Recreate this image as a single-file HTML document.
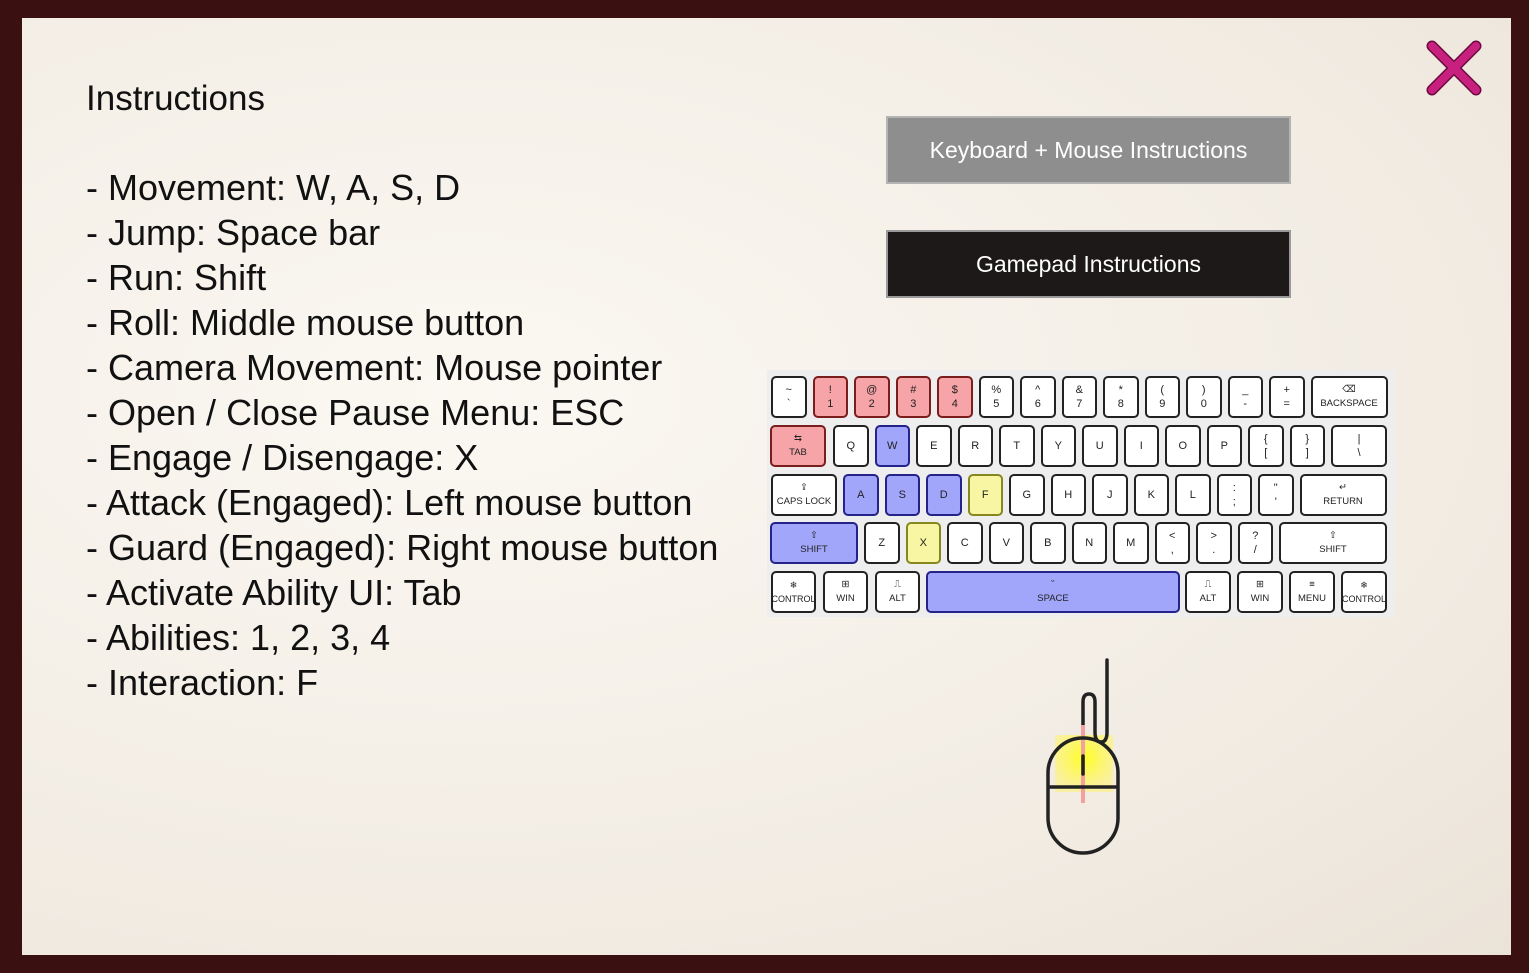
<!DOCTYPE html>
<html><head><meta charset="utf-8"><style>
body{margin:0;width:1529px;height:973px;background:#3a1010;position:relative;overflow:hidden;font-family:"Liberation Sans",sans-serif}
#p{position:absolute;left:22px;top:18px;width:1489px;height:937px;background:radial-gradient(ellipse at 30% 40%,#fbf8f2,#f1ebe2 70%,#ebe3d8)}
.t{position:absolute;left:86px;color:#111;font-size:36px;line-height:45px;white-space:nowrap}
.btn{position:absolute;left:886px;width:401px;height:64px;color:#fff;font-size:23px;display:flex;align-items:center;justify-content:center;border:2px solid}
#kb{position:absolute;left:767px;top:370px;width:628px;height:247px;background:#eeeeee}
.r{position:absolute;display:flex;height:42px}
.k{box-sizing:border-box;width:35.5px;height:42px;margin-right:6px;border:2px solid #222;border-radius:5px;background:#fff;font-size:11px;color:#222;display:flex;flex-direction:column;align-items:center;justify-content:center;line-height:14px;text-align:center}
.s{font-size:9.5px}
.red{background:#f6a4a8;border-color:#7a1d1d}.blu{background:#a2a6fa;border-color:#23238a}.yel{background:#f8f6a2;border-color:#878720}
</style></head><body>
<div id="p"></div>
<div class="t" style="top:76px;font-size:35px">Instructions</div>
<div class="t" style="top:165px">- Movement: W, A, S, D<br>- Jump: Space bar<br>- Run: Shift<br>- Roll: Middle mouse button<br>- Camera Movement: Mouse pointer<br>- Open / Close Pause Menu: ESC<br>- Engage / Disengage: X<br>- Attack (Engaged): Left mouse button<br>- Guard (Engaged): Right mouse button<br>- Activate Ability UI: Tab<br>- Abilities: 1, 2, 3, 4<br>- Interaction: F</div>
<div class="btn" style="top:116px;background:#8e8e8e;border-color:#b4b4b4">Keyboard + Mouse Instructions</div>
<div class="btn" style="top:230px;background:#1d1919;border-color:#9a9a9a">Gamepad Instructions</div>
<svg style="position:absolute;left:1424px;top:38px" width="60" height="60"><path d="M8 8L52 52M52 8L8 52" stroke="#6a0a40" stroke-width="11" stroke-linecap="round"/><path d="M8 8L52 52M52 8L8 52" stroke="#c8207f" stroke-width="8" stroke-linecap="round"/></svg>
<div id="kb">
<div class="r" style="left:4px;top:6px">
<div class="k">~<br>`</div><div class="k red">!<br>1</div><div class="k red">@<br>2</div><div class="k red">#<br>3</div><div class="k red">$<br>4</div><div class="k">%<br>5</div><div class="k">^<br>6</div><div class="k">&amp;<br>7</div><div class="k">*<br>8</div><div class="k">(<br>9</div><div class="k">)<br>0</div><div class="k">_<br>-</div><div class="k">+<br>=</div><div class="k s" style="width:77px">⌫<br>BACKSPACE</div></div>
<div class="r" style="left:3px;top:55px">
<div class="k red s" style="width:56px;margin-right:7px">⇆<br>TAB</div><div class="k">Q</div><div class="k blu">W</div><div class="k">E</div><div class="k">R</div><div class="k">T</div><div class="k">Y</div><div class="k">U</div><div class="k">I</div><div class="k">O</div><div class="k">P</div><div class="k">{<br>[</div><div class="k">}<br>]</div><div class="k" style="width:56px">|<br>\</div></div>
<div class="r" style="left:4px;top:104px">
<div class="k s" style="width:66px">⇪<br>CAPS LOCK</div><div class="k blu">A</div><div class="k blu">S</div><div class="k blu">D</div><div class="k yel">F</div><div class="k">G</div><div class="k">H</div><div class="k">J</div><div class="k">K</div><div class="k">L</div><div class="k">:<br>;</div><div class="k">"<br>'</div><div class="k s" style="width:87px">↵<br>RETURN</div></div>
<div class="r" style="left:3px;top:152px">
<div class="k blu s" style="width:88px">⇧<br>SHIFT</div><div class="k">Z</div><div class="k yel">X</div><div class="k">C</div><div class="k">V</div><div class="k">B</div><div class="k">N</div><div class="k">M</div><div class="k">&lt;<br>,</div><div class="k">&gt;<br>.</div><div class="k">?<br>/</div><div class="k s" style="width:108px">⇧<br>SHIFT</div></div>
<div class="r" style="left:4px;top:201px">
<div class="k s" style="width:45px;margin-right:7px;font-size:9px">❄<br>CONTROL</div><div class="k s" style="width:45px;margin-right:7px">⊞<br>WIN</div><div class="k s" style="width:45px;margin-right:6px">⎍<br>ALT</div><div class="k blu s" style="width:254px;margin-right:5px">˘<br>SPACE</div><div class="k s" style="width:46px;margin-right:6px">⎍<br>ALT</div><div class="k s" style="width:46px;margin-right:6px">⊞<br>WIN</div><div class="k s" style="width:46px;margin-right:6px">≡<br>MENU</div><div class="k s" style="width:46px;font-size:9px">❄<br>CONTROL</div></div>
</div>
<svg style="position:absolute;left:1030px;top:650px" width="110" height="215">
<defs><radialGradient id="g" cx="0.5" cy="0.4" r="0.6"><stop offset="0" stop-color="#ffff20"/><stop offset="1" stop-color="#fff27a" stop-opacity="0.6"/></radialGradient></defs>
<rect x="25" y="85" width="58" height="57" fill="url(#g)"/>
<path d="M77 10V82Q77 92 71 92Q65 92 65 82V52Q65 44 59 44Q53 44 53 52V88" fill="none" stroke="#222" stroke-width="3.5" stroke-linecap="round"/>
<rect x="51" y="75" width="4" height="78" fill="#f4a0a0"/>
<rect x="18" y="88" width="70" height="115" rx="35" fill="none" stroke="#222" stroke-width="3.5"/>
<line x1="18" y1="137" x2="88" y2="137" stroke="#222" stroke-width="3.5"/>
<line x1="53" y1="106" x2="53" y2="124" stroke="#222" stroke-width="3.5" stroke-linecap="round"/>
</svg>
</body></html>
